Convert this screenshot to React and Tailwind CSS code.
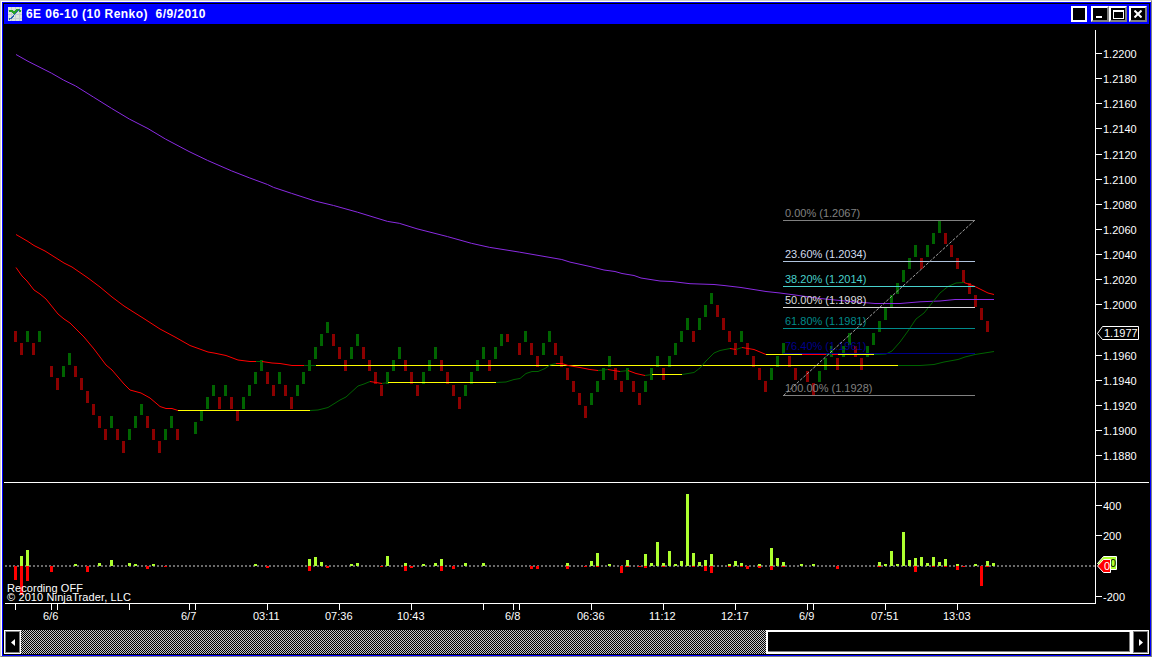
const BAR_STEP = 6;
const ZERO_Y = 566;

const COLORS = {
  up: "#006400",
  down: "#8b0000",
  red: "#ff0000",
  green: "#006400",
  yellow: "#ffff00",
  purple: "#8a2be2",
  volume: "#adff2f",
};

// Brick tops that round to an 11px body instead of 12px
const SHORT_TOPS = [
  331, 356, 381, 293, 366, 404, 429, 322, 360, 385, 410, 233, 258, 283, 321,
  346, 371,
];

// Each run is a start x and the brick tops, a negative top is a down brick
const BRICK_RUNS = [
  { x: 14, tops: [-331, -343, 331, -343, 331] },
  {
    x: 50,
    tops: [
      -366, -378, 366, 353, -366, -378, -391, -404, -416, -429, 416, -429, -441,
      429, 416, 404, -416, -429, -441, 429, 416, -429,
    ],
  },
  {
    x: 194,
    tops: [
      422, 410, 397, 385, -397, 385, -397, -410, 397, 385, 372, 360, -372, -385,
      372, -385, -397, 385, 372, 360, 347, 334, 322, -334, -347, -360, 347, 334,
      -347, -360, -372, -385, 372, 360, 347, -360, -372, -385, 372, 360, 347,
      -360, -372, -385, -397, 385, 372, 360, 347, -360, 347, 334,
    ],
  },
  {
    x: 518,
    tops: [
      -343, 331, -343, -356, 343, 331, -343, -356, -368, -381, -393, -406, 393,
      381, 368, 356, -368, -381, 368, -381, -393, 381, 368, 356, -368, 356, 343,
      331, 318, -331, 318, 305, 293, -305, -318, -331, -343, 331, -343, -356,
      -368, -381, 368, 356, 343, -356, -368,
    ],
  },
  {
    x: 806,
    tops: [
      -371, -383, 371, 358, 346, -358, 346, 333, -346, -358, 346, 333, 321, 308,
      295, 283, 270, 258, 245, -258, 245, 233, 221, -233, -245, -258, -270,
      -283, -295, -308, -321,
    ],
  },
];

const PURPLE_LINE =
  "16,54.5 28,61.3 51.4,73.1 63.6,80.1 75.7,86 93.6,97.2 111.4,108.3 129.3,119 148,128.6 165.4,139 189,151.5 207.5,160.4 231.4,170.8 249.3,177.8 267.5,184.5 273.6,187.4 291.4,193.3 315.4,201.1 333.6,205.5 357.5,212.2 387.5,221.4 399.3,223.3 417,228.8 447.5,236.6 471.4,243.3 489.3,247.3 519.3,252.1 561.8,259.5 570,262.1 590,266.5 604,270 615,271.5 622,273.5 634,275.5 641,278 660,281 672,281.5 690,283.7 714,284.5 724,285.5 741,287.5 766,291.5 780,293 800,295.7 820,298.5 845,301 875,303.5 900,303.5 920,301.8 940,301 955,299.5 994,299.5";

const AVERAGES = [
  // slow average
  ["red", "16,234.5 22,238 28,241.5 34,245.5 45,251 64,263 72,267 88,278 100,287 112,297 124,306 135,313 143,318 160,329 175,337 190,345.5 208,352 214,353 226,355.5 238,360 250,361.5 256,361.5"],
  ["green", "256,361.5 262,361.5"],
  ["red", "262,361.5 272,363 280,363.5 292,365.5 304,365.5"],
  ["green", "304,365.5 316,365.5"],
  ["yellow", "316,365.5 898,365.5"],
  ["green", "898,365.5 920,365.5 934,364.5 944,362 958,359.5 965,357 975,354.5 994,351.5"],
  // fast average
  ["red", "16,267.5 22,276 27,281 34,290 40,294 46,299 58,314 64,319 70,323 84,337 94,349 106,365 112,370 124,384 130,390 141,393 150,398 160,406.5 166,408.5 172,408.5 178,410.5"],
  ["yellow", "178,410.5 310,410.5"],
  ["green", "310,410.5 318,410 328,407.5 340,400 346,397 358,386 364,384 370,381.5"],
  ["red", "370,381.5 382,383.5"],
  ["green", "382,383.5 388,382.5"],
  ["yellow", "388,382.5 496,382.5"],
  ["green", "496,382.5 506,382 514,379.5 520,378.5 526,373.5 532,371.5 538,371.5 545,368.5 550,365 556,363.5"],
  ["red", "556,363.5 562,363.5 568,365.5 580,367.5 590,369.5 598,370.5"],
  ["green", "598,370.5 608,369.5"],
  ["red", "608,369.5 614,370.5 620,371.5"],
  ["green", "620,371.5 628,370.5"],
  ["red", "628,370.5 636,373.5 645,375.5"],
  ["green", "645,375.5 652,374.5"],
  ["yellow", "652,374.5 682,374.5"],
  ["green", "682,374.5 694,372.5 700,368 706,361 714,353 720,350.5 730,348.5"],
  ["red", "730,348.5 736,349.5"],
  ["green", "736,349.5 742,347.5"],
  ["red", "742,347.5 754,349.5 760,352 766,354.5"],
  ["yellow", "766,354.5 802,354.5"],
  ["red", "802,354.5 826,354.5"],
  ["green", "826,354.5 832,354.5"],
  ["red", "832,354.5 838,354.5"],
  ["yellow", "838,354.5 874,354.5"],
  ["green", "874,354.5 886,354 892,351 900,342 908,331 916,319 924,313 932,303 940,293 948,286.5 956,283 964,282.5"],
  ["red", "964,282.5 974,286 982,290 988,293 994,294.5"],
];

// [x, buy height, sell height]
const VOLUME = [
  [14, 0, 14], [20, 10, 29], [26, 16, 15], [50, 0, 6], [74, 2, 0], [86, 0, 6],
  [98, 3, 0], [110, 6, 0], [128, 3, 0], [134, 2, 0], [146, 0, 3], [152, 2, 0],
  [164, 0, 1], [254, 2, 0], [266, 0, 2], [308, 7, 5], [314, 9, 0], [320, 4, 0],
  [326, 0, 2], [350, 2, 0], [356, 3, 0], [380, 0, 1], [386, 10, 0], [404, 3, 5],
  [410, 0, 2], [422, 2, 0], [434, 3, 0], [440, 7, 5], [452, 0, 3], [464, 3, 0],
  [482, 3, 0], [530, 0, 3], [536, 0, 3], [566, 3, 3], [584, 0, 1], [590, 5, 0],
  [596, 13, 1], [608, 2, 0], [620, 0, 7], [626, 6, 1], [638, 0, 1],
  [644, 12, 2], [650, 3, 0], [656, 24, 0], [662, 3, 1], [668, 15, 0],
  [674, 2, 0], [680, 5, 0], [686, 72, 0], [692, 13, 1], [698, 4, 0],
  [704, 6, 5], [710, 12, 7], [728, 2, 1], [734, 5, 0], [740, 3, 1], [746, 0, 3],
  [758, 2, 2], [770, 18, 4], [776, 8, 0], [782, 4, 1], [800, 2, 0], [812, 2, 0],
  [836, 0, 3], [878, 4, 1], [884, 2, 0], [890, 15, 0], [896, 2, 0],
  [902, 34, 0], [908, 6, 0], [914, 8, 6], [920, 9, 0], [926, 3, 0], [932, 9, 1],
  [938, 4, 0], [944, 7, 1], [956, 2, 4], [962, 0, 1], [974, 2, 0], [980, 0, 20],
  [986, 5, 1], [992, 3, 0],
];

const PRICE_TICKS = [
  ["1.2200", 53], ["1.2180", 78], ["1.2160", 103], ["1.2140", 128],
  ["1.2120", 154], ["1.2100", 179], ["1.2080", 204], ["1.2060", 229],
  ["1.2040", 254], ["1.2020", 279], ["1.2000", 304], ["1.1960", 355],
  ["1.1940", 380], ["1.1920", 405], ["1.1900", 430], ["1.1880", 455],
  ["400", 505], ["200", 535], ["-200", 596],
];

const TIME_TICKS = [
  15, 51, 57, 129, 189, 195, 267, 339, 411, 483, 513, 519, 591, 663, 735, 807,
  813, 885, 957,
];

const TIME_LABELS = [
  ["6/6", 43], ["6/7", 181], ["03:11", 253], ["07:36", 325], ["10:43", 397],
  ["6/8", 505], ["06:36", 577], ["11:12", 649], ["12:17", 721], ["6/9", 799],
  ["07:51", 871], ["13:03", 943],
];

const FIB_LEVELS = [
  { label: "0.00% (1.2067)", y: 220, color: "#808080" },
  { label: "23.60% (1.2034)", y: 261, color: "#b0c4de", text: "#d3dcec" },
  { label: "38.20% (1.2014)", y: 286, color: "#48d1cc" },
  { label: "50.00% (1.1998)", y: 307, color: "#dcdcdc" },
  { label: "61.80% (1.1981)", y: 328, color: "#008b8b" },
  { label: "76.40% (1.1961)", y: 353, color: "#00008b" },
  { label: "100.00% (1.1928)", y: 395, color: "#808080" },
];

const Bricks = () => (
  <g>
    {BRICK_RUNS.map((run) =>
      run.tops.map((top, i) => {
        const y = Math.abs(top);
        return (
          <rect
            key={`${run.x}-${i}`}
            x={run.x + i * BAR_STEP}
            y={y}
            width={3}
            height={SHORT_TOPS.includes(y) ? 11 : 12}
            fill={top > 0 ? COLORS.up : COLORS.down}
          />
        );
      })
    )}
    {/* last brick of the session closes early */}
    <rect x={506} y={334} width={3} height={8} fill={COLORS.down} />
  </g>
);

const Averages = () => (
  <g fill="none" strokeWidth={1}>
    <polyline points={PURPLE_LINE} stroke={COLORS.purple} />
    {AVERAGES.map(([color, points]) => (
      <polyline key={points} points={points} stroke={COLORS[color]} />
    ))}
  </g>
);

const Fibonacci = () => (
  <g>
    {FIB_LEVELS.map(({ label, y, color, text }) => (
      <g key={label}>
        <rect x={783} y={y} width={192} height={1} fill={color} />
        <text x={785} y={y - 3} fill={text || color}>
          {label}
        </text>
      </g>
    ))}
    <line
      x1={783.5}
      y1={395.5}
      x2={974.5}
      y2={220.5}
      stroke="#a0a0a0"
      strokeDasharray="3 1.5"
    />
  </g>
);

const Volume = () => (
  <g>
    <line
      x1={5}
      x2={1095}
      y1={566}
      y2={566}
      stroke="#696969"
      strokeWidth={2}
      strokeDasharray="2 2"
    />
    {VOLUME.map(([x, buy, sell]) => (
      <g key={x}>
        <rect x={x} y={ZERO_Y - buy} width={3} height={buy} fill={COLORS.volume} />
        <rect x={x} y={ZERO_Y} width={3} height={sell} fill={COLORS.red} />
      </g>
    ))}
  </g>
);

const Axes = () => (
  <g fill="#fff">
    <rect x={4} y={482} width={1145} height={1} />
    <rect x={5} y={603} width={1091} height={1} />
    <rect x={1095} y={30} width={1} height={574} />
    {PRICE_TICKS.map(([label, y]) => (
      <g key={label}>
        <rect x={1096} y={y} width={6} height={1} />
        <text x={1103} y={y + 5}>
          {label}
        </text>
      </g>
    ))}
    {TIME_TICKS.map((x) => (
      <rect key={x} x={x} y={604} width={1} height={6} />
    ))}
    {TIME_LABELS.map(([label, x]) => (
      <text key={label} x={x} y={620}>
        {label}
      </text>
    ))}
  </g>
);

const Markers = () => (
  <g stroke="#fff" strokeWidth={1}>
    <path d="M1097.5 333.5 L1102.5 326.5 H1138.5 V339.5 H1102.5 Z" fill="#000" />
    <text x={1104} y={337} fill="#fff" stroke="none">
      1.1977
    </text>
    <path d="M1097.5 563.5 L1103.5 556.5 H1116.5 V569.5 H1103.5 Z" fill={COLORS.volume} />
    <text x={1110} y={567} fill="#000" stroke="none">
      0
    </text>
    <path d="M1097.5 566 L1103.5 559.5 H1110.5 V572.5 H1103.5 Z" fill={COLORS.red} />
    <text x={1104} y={570} fill="#fff" stroke="none">
      0
    </text>
  </g>
);

const Chart = () => (
  <svg
    className="block h-[606px] w-[1145px] shrink-0"
    viewBox="4 24 1145 606"
    fontFamily='"Liberation Sans", Arial, sans-serif'
    fontSize={11}
  >
    <Bricks />
    <Averages />
    <Fibonacci />
    <Volume />
    <Axes />
    <Markers />
    <text x={7} y={592} fill="#fff" textLength={76}>
      Recording OFF
    </text>
    <text x={7} y={601} fill="#fff" textLength={124}>
      © 2010 NinjaTrader, LLC
    </text>
  </svg>
);

const WindowButton = ({ label, className, children }) => (
  <button
    aria-label={label}
    className={`flex h-4 items-center justify-center border-2 border-white bg-black ${className}`}
  >
    {children}
  </button>
);

const TitleBar = () => (
  <div className="flex h-5 shrink-0 items-center bg-[#0000ff] pr-0.5 pl-1">
    <svg width="14" height="14" viewBox="0 0 14 14" shapeRendering="crispEdges">
      <rect width="14" height="14" fill="#dce6dc" />
      <path d="M0 3.5H14M0 7.5H14M0 11.5H14M3.5 0V14M7.5 0V14M11.5 0V14" stroke="#c4ccd4" />
      <path d="M1 4L4 4L6 6L9 3L11 3L13 5" fill="none" stroke="#27a327" strokeWidth="1.5" />
      <path d="M1 12L4 11L6 8L8 6L10 4L12 2" fill="none" stroke="#2a62b4" strokeWidth="1.3" />
    </svg>
    <span className="ml-1 text-[12px] leading-5 font-bold tracking-[0.45px] whitespace-pre text-white">
      {"6E 06-10 (10 Renko)  6/9/2010"}
    </span>
    <div className="ml-auto flex items-center">
      <WindowButton label="Link" className="mr-1 w-4" />
      <WindowButton label="Minimize" className="w-[18px] border-r-[#808080] border-b-[#808080]">
        <span className="mt-1.5 mr-0.5 h-0.5 w-1.5 bg-white" />
      </WindowButton>
      <WindowButton label="Maximize" className="w-[18px] border-r-[#808080] border-b-[#808080]">
        <span className="h-[9px] w-[11px] border border-t-2 border-white" />
      </WindowButton>
      <WindowButton label="Close" className="ml-0.5 w-[18px] border-r-[#808080] border-b-[#808080]">
        <svg width="8" height="8" viewBox="0 0 8 8">
          <path d="M0.5 0.5L7.5 7.5M7.5 0.5L0.5 7.5" stroke="#fff" strokeWidth="2" />
        </svg>
      </WindowButton>
    </div>
  </div>
);

const ArrowButton = ({ label, points }) => (
  <button
    aria-label={label}
    className="flex w-[17px] items-center justify-center border border-white bg-black shadow-[inset_-1px_-1px_0_#808080,inset_1px_1px_0_#808080]"
  >
    <svg width="4" height="7" viewBox="0 0 4 7">
      <polygon points={points} fill="#fff" />
    </svg>
  </button>
);

const ScrollBar = () => (
  <div className="flex h-6 shrink-0">
    <ArrowButton label="Scroll left" points="4,0 4,7 0,3.5" />
    <div className="flex flex-1 bg-[repeating-conic-gradient(#000_0_25%,#c8c8c8_0_50%)] bg-size-[2px_2px]">
      <div className="ml-auto w-[366px] border-2 border-white bg-black shadow-[inset_-1px_-1px_0_#808080]" />
    </div>
    <ArrowButton label="Scroll right" points="0,0 0,7 4,3.5" />
  </div>
);

const App = () => {
  return (
    <div className="h-[658px] w-[1153px] overflow-hidden bg-white pr-px pb-px font-['Liberation_Sans',Arial,sans-serif]">
      <div className="h-full border border-t-[#d4d0c8] border-r-[#808080] border-b-[#808080] border-l-[#d4d0c8]">
        <div className="h-full border-t border-l border-white">
          <div className="flex h-full flex-col border border-[#0000ff] bg-black p-px">
            <TitleBar />
            <Chart />
            <ScrollBar />
          </div>
        </div>
      </div>
    </div>
  );
};

export default App;
